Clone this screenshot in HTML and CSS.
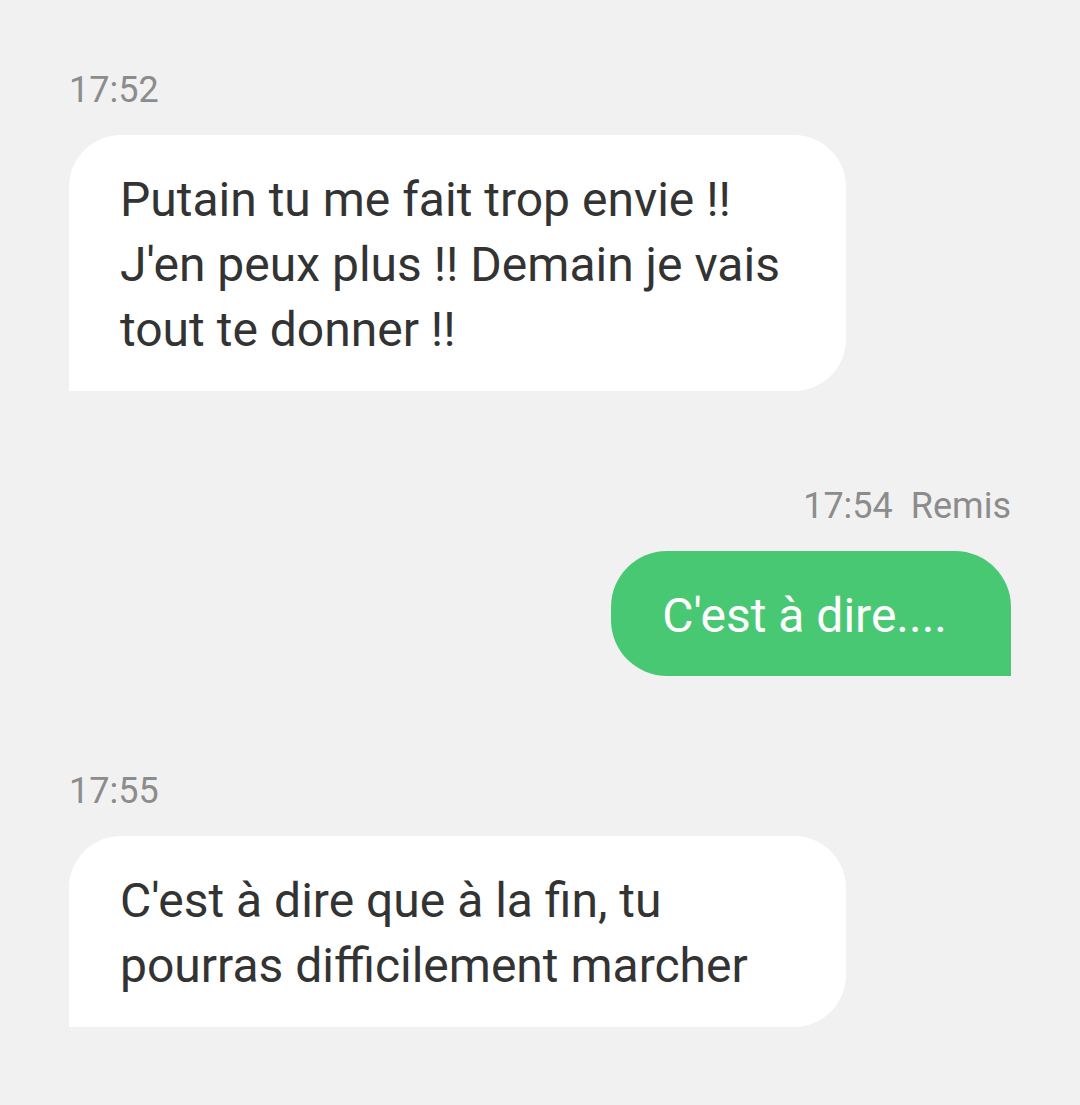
FILE: index.html
```html
<!DOCTYPE html>
<html lang="fr">
<head>
    <meta charset="UTF-8">
    <meta name="viewport" content="width=device-width, initial-scale=1.0">
    <title>Messages</title>
    <link rel="stylesheet" href="styles.css">
</head>
<body>
    <div class="thread">
        <!-- Received -->
        <div class="group received">
            <div class="stamp">17:52</div>
            <div class="bubble">Putain tu me fait trop envie !! J'en peux plus !! Demain je vais tout te donner !!</div>
        </div>

        <!-- Sent -->
        <div class="group sent">
            <div class="stamp"><span>17:54</span><span>Remis</span></div>
            <div class="bubble">C'est à dire....</div>
        </div>

        <div class="group received">
            <div class="stamp">17:55</div>
            <div class="bubble">C'est à dire que à la fin, tu pourras difficilement marcher</div>
        </div>
    </div>
</body>
</html>
```

FILE: styles.css
```css
/* Reset */
* {
    margin: 0;
    padding: 0;
    box-sizing: border-box;
}

body {
    font-family: Roboto, 'Noto Sans', sans-serif;
    background-color: #f1f1f1;
    color: #333;
}

/* Thread */
.thread {
    display: flex;
    flex-direction: column;
    gap: 95px;
    padding: 70px 69px 0 69px;
}

.group {
    display: flex;
    flex-direction: column;
    gap: 25px;
}

.group.received {
    align-items: flex-start;
}

.group.sent {
    align-items: flex-end;
}

/* Time + status */
.stamp {
    display: flex;
    gap: 18px;
    font-size: 36px;
    line-height: 40px;
    color: #8c8c8c;
}

/* Bubbles */
.bubble {
    font-size: 48px;
    line-height: 65px;
    padding: 32px 50px 29px 51px;
}

.received .bubble {
    width: 777px;
    background-color: #fff;
    color: #333;
    border-radius: 52px 52px 52px 0;
}

.sent .bubble {
    background-color: #49c874;
    color: #fff;
    padding-bottom: 28px;
    padding-right: 64px;
    border-radius: 56px 56px 0 56px;
}
```
